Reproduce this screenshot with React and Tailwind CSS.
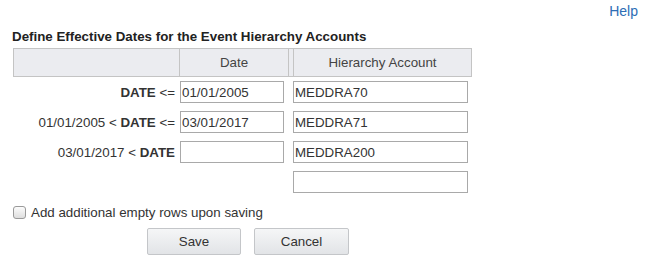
export default function App() {
  const rows = [
    { pre: "", op: "<=", date: "01/01/2005", acct: "MEDDRA70" },
    { pre: "01/01/2005 < ", op: "<=", date: "03/01/2017", acct: "MEDDRA71" },
    { pre: "03/01/2017 < ", op: "", date: "", acct: "MEDDRA200" },
  ];

  return (
    <div className="w-[645px] h-[269px] bg-white font-['Liberation_Sans',Arial,sans-serif] text-[13.33px] leading-[15px] text-[#333]">
      {/* Help link */}
      <div className="flex justify-end pt-[3px] pr-[7px]">
        <a className="text-[14px] leading-[16px] text-[#2d6db5] cursor-pointer">Help</a>
      </div>

      <div className="pl-[13px]">
        <h2 className="mt-[10px] -ml-[1px] font-bold text-[13.33px] leading-[15px] text-[#222]">
          Define Effective Dates for the Event Hierarchy Accounts
        </h2>

        {/* Table header */}
        <div className="mt-[4px] flex w-[459px] h-[29px] border border-[#c4c4c4] bg-[#ebecf0] text-[#444]">
          <div className="w-[165px]" />
          <div className="w-[109px] border-l border-[#c4c4c4] flex items-center justify-center">Date</div>
          <div className="w-[5px] border-l border-[#c4c4c4]" />
          <div className="w-[178px] border-l border-[#c4c4c4] flex items-center justify-center">
            Hierarchy Account
          </div>
        </div>

        {/* Rows */}
        <div className="mt-[4px] flex flex-col gap-[8px]">
          {rows.map((r, i) => (
            <div key={i} className="flex items-center h-[22px]">
              <div className="w-[162px] text-right whitespace-nowrap">
                {r.pre}
                <b>DATE</b>
                {r.op ? " " + r.op : ""}
              </div>
              <input
                readOnly
                value={r.date}
                className="ml-[5px] w-[104px] h-[22px] px-[1px] border border-[#a9a9a9] text-[13.33px] text-[#333] outline-none"
              />
              <input
                readOnly
                value={r.acct}
                className="ml-[9px] w-[175px] h-[22px] px-[1px] border border-[#a9a9a9] text-[13.33px] text-[#333] outline-none"
              />
            </div>
          ))}
          <div className="flex items-center h-[22px]">
            <input
              readOnly
              value=""
              className="ml-[280px] w-[175px] h-[22px] px-[1px] border border-[#a9a9a9] outline-none"
            />
          </div>
        </div>

        {/* Checkbox */}
        <label className="mt-[13px] flex items-center h-[13px]">
          <span className="w-[13px] h-[13px] rounded-[3px] border border-[#9a9a9a] bg-gradient-to-b from-[#fcfcfc] to-[#dedede]" />
          <span className="ml-[5px] whitespace-nowrap">Add additional empty rows upon saving</span>
        </label>

        {/* Buttons */}
        <div className="mt-[9px] flex ml-[134px]">
          <button className="w-[94px] h-[27px] rounded-[2px] border border-[#c4c6c9] bg-gradient-to-b from-[#f5f6f7] to-[#e2e4e7] text-[13.33px] text-[#333]">
            Save
          </button>
          <button className="ml-[13px] w-[95px] h-[27px] rounded-[2px] border border-[#c4c6c9] bg-gradient-to-b from-[#f5f6f7] to-[#e2e4e7] text-[13.33px] text-[#333]">
            Cancel
          </button>
        </div>
      </div>
    </div>
  );
}
